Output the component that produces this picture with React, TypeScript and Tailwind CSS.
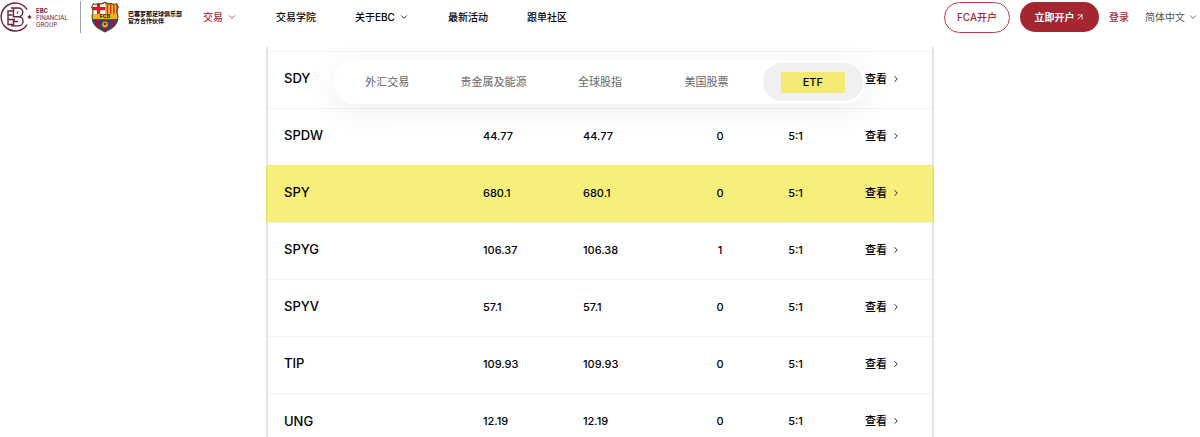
import { useState } from "react";
import { ArrowUpRight, ChevronDown, ChevronRight } from "lucide-react";

const navItems = [
  { label: "交易", active: true, menu: true },
  { label: "交易学院", active: false, menu: false },
  { label: "关于EBC", active: false, menu: true },
  { label: "最新活动", active: false, menu: false },
  { label: "跟单社区", active: false, menu: false },
];

const tabs = ["外汇交易", "贵金属及能源", "全球股指", "美国股票", "ETF"];

const rows = [
  { symbol: "SDY", bid: "", ask: "", spread: "", leverage: "" },
  { symbol: "SPDW", bid: "44.77", ask: "44.77", spread: "0", leverage: "5:1" },
  { symbol: "SPY", bid: "680.1", ask: "680.1", spread: "0", leverage: "5:1" },
  { symbol: "SPYG", bid: "106.37", ask: "106.38", spread: "1", leverage: "5:1" },
  { symbol: "SPYV", bid: "57.1", ask: "57.1", spread: "0", leverage: "5:1" },
  { symbol: "TIP", bid: "109.93", ask: "109.93", spread: "0", leverage: "5:1" },
  { symbol: "UNG", bid: "12.19", ask: "12.19", spread: "0", leverage: "5:1" },
];

function EbcLogo() {
  return (
    <svg
      viewBox="0 0 32 32"
      className="w-8 h-8 shrink-0"
      fill="none"
      stroke="#6d2138"
      strokeWidth="1.4"
    >
      <path d="M27 8.500A14 14 0 1 0 27 23.500" />
      <path d="M13.500 10H8v13.500h5.500M8 14h4.500M8 18.500h7" />
      <path d="M13.500 7v3M11 7h7.500a4.300 4.300 0 0 1 0 8.700H13.500V10M18.500 15.700a4.600 4.600 0 0 1 0 9.200H11M13.500 25v-6.500M17.500 10.500v2M13.500 20.500H18" />
      <path d="M29.500 14.200v3.600M27.700 16h3.600" strokeWidth="1.6" />
    </svg>
  );
}

function ClubCrest() {
  return (
    <svg viewBox="0 0 28 30" className="w-[30px] h-8 shrink-0">
      <defs>
        <clipPath id="crest">
          <path d="M3 2.5Q5.5 3.8 8 2.3Q11 3.5 14 1.2Q17 3.5 20 2.3Q22.5 3.8 25 2.5L26.5 6Q24.5 8.500 25.8 12.5C27.5 20 23.5 25 14 29C4.5 25 .5 20 2.2 12.5Q3.5 8.5 1.5 6Z" />
        </clipPath>
      </defs>
      <g clipPath="url(#crest)">
        <rect width="28" height="30" fill="#164a8c" />
        <rect width="14" height="13" fill="#fff" />
        <path d="M7.9 1v12M1 7.2h13" stroke="#e4152b" strokeWidth="3" />
        <rect x="14" width="14" height="13" fill="#f7c723" />
        <path d="M16.3 0v13M19.3 0v13M22.3 0v13M25.3 0v13" stroke="#d9202e" strokeWidth="1.4" />
        <path d="M7 16v14M14 16v14M21 16v14" stroke="#a3123e" strokeWidth="3.5" />
        <rect y="12" width="28" height="5" fill="#eeb41f" />
        <circle cx="14" cy="22" r="3" fill="#f0ba25" stroke="#6b3a17" strokeWidth=".6" />
        <path d="M12.5 21l1.5-1 1.5 1-.6 1.7h-1.8z" fill="#6b3a17" />
      </g>
      <path
        d="M3 2.5Q5.5 3.8 8 2.3Q11 3.5 14 1.2Q17 3.5 20 2.3Q22.5 3.8 25 2.5L26.5 6Q24.5 8.5 25.8 12.5C27.5 20 23.5 25 14 29C4.5 25 .5 20 2.2 12.5Q3.5 8.5 1.5 6Z"
        fill="none"
        stroke="#5c4a18"
        strokeWidth="1"
      />
      <text
        x="14"
        y="16.3"
        textAnchor="middle"
        fontSize="5"
        fontWeight="700"
        fill="#2d2a1e"
      >
        FCB
      </text>
    </svg>
  );
}

function Header() {
  return (
    <header className="flex items-start justify-between h-[47px] pr-0.5 shrink-0">
      <div className="flex items-center h-[34px]">
        <a href="#" className="flex items-center w-20 gap-1">
          <EbcLogo />
          <span className="text-[6px] leading-[7px] text-[#6d2138]">
            <b>EBC</b>
            <br />
            FINANCIAL
            <br />
            GROUP
          </span>
        </a>
        <a href="#" className="flex items-center gap-2 border-l border-gray-400 pl-[9px]">
          <ClubCrest />
          <span className="text-[6px] leading-[7px] font-bold text-black whitespace-nowrap">
            巴塞罗那足球俱乐部
            <br />
            官方合作伙伴
          </span>
        </a>
        <nav className="flex items-center gap-[39px] ml-[21px]">
          {navItems.map((item) => (
            <a
              key={item.label}
              href="#"
              className={`flex items-center gap-1 text-[10px] font-medium whitespace-nowrap ${
                item.active ? "text-[#b02a38]" : "text-black"
              }`}
            >
              {item.label}
              {item.menu && <ChevronDown className="w-[10px] h-[10px]" strokeWidth={2} />}
            </a>
          ))}
        </nav>
      </div>

      <div className="flex items-center h-[34px] text-[10px] whitespace-nowrap">
        <a
          href="#"
          className="flex items-center justify-center w-[66px] h-[31px] rounded-full border border-[#b8404c] font-medium text-[#a32832]"
        >
          FCA开户
        </a>
        <a
          href="#"
          className="flex items-center justify-center w-[79px] h-[30px] ml-[10px] rounded-full bg-[#a32630] font-bold text-white"
        >
          立即开户
          <ArrowUpRight className="w-[10px] h-[10px]" strokeWidth={2} />
        </a>
        <a href="#" className="ml-[10px] font-medium text-[#a32832]">
          登录
        </a>
        <button type="button" className="flex items-center gap-[3px] ml-4 text-[#555]">
          简体中文
          <ChevronDown className="w-[10px] h-[10px]" strokeWidth={2} />
        </button>
      </div>
    </header>
  );
}

export default function App() {
  const [activeTab, setActiveTab] = useState("ETF");

  return (
    <div className="flex flex-col h-screen overflow-hidden bg-white text-black font-['Inter','Noto_Sans_CJK_SC',sans-serif]">
      <Header />

      <main className="relative w-full max-w-[668px] mx-auto">
        {/* Category tabs float over the list */}
        <div
          role="tablist"
          className="absolute top-[13px] inset-x-[68px] flex h-11 rounded-full bg-white shadow-[0_6px_30px_rgba(0,0,0,0.07)]"
        >
          {tabs.map((tab) => (
            <button
              key={tab}
              type="button"
              role="tab"
              aria-selected={tab === activeTab}
              onClick={() => setActiveTab(tab)}
              className="flex-1 p-[3px] text-[11px]"
            >
              {tab === activeTab ? (
                <span className="flex items-center justify-center h-full rounded-full bg-[#f0f0f0] font-medium text-black">
                  <span className="w-16 bg-[#f3ea75] leading-[21px]">{tab}</span>
                </span>
              ) : (
                <span className="text-[#666]">{tab}</span>
              )}
            </button>
          ))}
        </div>

        <div className="border-x-2 border-[#e3e3e3] pt-1">
          <table className="w-full table-fixed text-[11px] font-medium">
            <colgroup>
              <col className="w-[215px]" />
              <col className="w-[100px]" />
              <col className="w-[100px]" />
              <col className="w-[74px]" />
              <col className="w-[77px]" />
              <col />
            </colgroup>
            <tbody>
              {rows.map((row) => (
                <tr
                  key={row.symbol}
                  className={`h-[57px] border-t *:pb-0.5 ${
                    row.symbol === "SPY"
                      ? "border-[#f7ef7b] bg-[#f7ef7b] outline-2 outline-[#efe672] [clip-path:inset(0_-2px)]"
                      : "border-[#f0f0f0]"
                  }`}
                >
                  <th scope="row" className="pl-4 text-left text-[13px] font-medium">
                    {row.symbol}
                  </th>
                  <td>{row.bid}</td>
                  <td>{row.ask}</td>
                  <td className="text-center">{row.spread}</td>
                  <td className="text-center">{row.leverage}</td>
                  <td className="pl-[31px]">
                    <a href="#" className="flex items-center gap-1">
                      查看
                      <ChevronRight className="w-[10px] h-[10px]" strokeWidth={2} />
                    </a>
                  </td>
                </tr>
              ))}
            </tbody>
          </table>
        </div>
      </main>
    </div>
  );
}
